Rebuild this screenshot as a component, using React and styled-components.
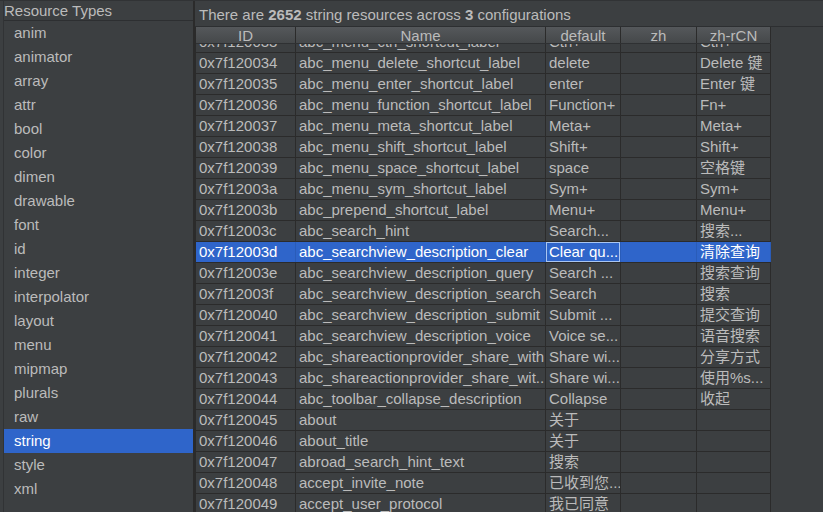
import React from 'react';
import styled, { createGlobalStyle } from 'styled-components';

const GlobalStyle = createGlobalStyle`
  *, *::before, *::after {
    box-sizing: border-box;
  }
  html, body {
    margin: 0;
    padding: 0;
    background: #3c3f41;
  }
  body {
    font-family: "Liberation Sans", "Noto Sans CJK SC", sans-serif;
    font-size: 15px;
    color: #bbbbbb;
  }
`;

const Page = styled.div`
  display: flex;
  width: 823px;
  height: 512px;
  overflow: hidden;
  border-top: 1px solid #313335;
  background: #3c3f41;
`;

const Sidebar = styled.div`
  display: flex;
  flex-direction: column;
  flex: none;
  width: 191px;
  margin-left: 3px;
  border-left: 1px solid #313335;
  border-right: 1px solid #2b2b2b;
`;

const SidebarTitle = styled.div`
  height: 20px;
  line-height: 20px;
  border-bottom: 1px solid #2d2f31;
  white-space: nowrap;
`;

const TypeList = styled.div`
  display: flex;
  flex-direction: column;
`;

const TypeItem = styled.div`
  height: 24px;
  line-height: 24px;
  padding-left: 10px;
  background: ${props => (props.selected ? '#2f65ca' : 'transparent')};
  color: ${props => (props.selected ? '#ffffff' : '#bbbbbb')};
`;

const Main = styled.div`
  display: flex;
  flex-direction: column;
  flex: 1;
  min-width: 0;
  border-left: 1px solid #2b2b2b;
`;

const Summary = styled.div`
  height: 26px;
  line-height: 27px;
  padding-left: 4px;
  border-bottom: 1px solid #2d2f31;
  white-space: nowrap;

  b {
    font-weight: bold;
  }
`;

const Table = styled.div`
  display: flex;
  flex-direction: column;
  flex: 1;
  min-height: 0;
  width: 576px;
  border-left: 1px solid #2b2b2b;
`;

const columns = '100px 250px 75px 76px 74px';

const HeaderRow = styled.div`
  display: grid;
  grid-template-columns: ${columns};
  height: 17px;
  flex: none;
  position: relative;
  z-index: 1;
  background: linear-gradient(#55585b, #45484a);
  border-bottom: 1px solid #2f3133;
`;

const HeaderCell = styled.div`
  text-align: center;
  line-height: 18px;
  border-right: 1px solid #2b2b2b;
  white-space: nowrap;
  overflow: hidden;
`;

const Body = styled.div`
  flex: 1;
  min-height: 0;
  overflow: hidden;
`;

const Rows = styled.div`
  margin-top: -12px;
`;

const Row = styled.div`
  display: grid;
  grid-template-columns: ${columns};
  height: 21px;
  border-bottom: 1px solid #2b2b2b;
  background: ${props => (props.selected ? '#2f65ca' : '#3c3f41')};
  color: ${props => (props.selected ? '#ffffff' : '#bbbbbb')};
`;

const Cell = styled.div`
  padding-left: 3px;
  line-height: 20px;
  white-space: nowrap;
  overflow: hidden;
  border-right: 1px solid ${props => (props.selected ? '#2a5cb8' : '#2b2b2b')};
  box-shadow: ${props => (props.focused ? 'inset 0 0 0 1px #a9c6f2' : 'none')};
`;

const types = [
  'anim', 'animator', 'array', 'attr', 'bool', 'color', 'dimen', 'drawable',
  'font', 'id', 'integer', 'interpolator', 'layout', 'menu', 'mipmap',
  'plurals', 'raw', 'string', 'style', 'xml',
];

const rows = [
  ['0x7f120033', 'abc_menu_ctrl_shortcut_label', 'Ctrl+', '', 'Ctrl+'],
  ['0x7f120034', 'abc_menu_delete_shortcut_label', 'delete', '', 'Delete 键'],
  ['0x7f120035', 'abc_menu_enter_shortcut_label', 'enter', '', 'Enter 键'],
  ['0x7f120036', 'abc_menu_function_shortcut_label', 'Function+', '', 'Fn+'],
  ['0x7f120037', 'abc_menu_meta_shortcut_label', 'Meta+', '', 'Meta+'],
  ['0x7f120038', 'abc_menu_shift_shortcut_label', 'Shift+', '', 'Shift+'],
  ['0x7f120039', 'abc_menu_space_shortcut_label', 'space', '', '空格键'],
  ['0x7f12003a', 'abc_menu_sym_shortcut_label', 'Sym+', '', 'Sym+'],
  ['0x7f12003b', 'abc_prepend_shortcut_label', 'Menu+', '', 'Menu+'],
  ['0x7f12003c', 'abc_search_hint', 'Search...', '', '搜索...'],
  ['0x7f12003d', 'abc_searchview_description_clear', 'Clear qu...', '', '清除查询'],
  ['0x7f12003e', 'abc_searchview_description_query', 'Search ...', '', '搜索查询'],
  ['0x7f12003f', 'abc_searchview_description_search', 'Search', '', '搜索'],
  ['0x7f120040', 'abc_searchview_description_submit', 'Submit ...', '', '提交查询'],
  ['0x7f120041', 'abc_searchview_description_voice', 'Voice se...', '', '语音搜索'],
  ['0x7f120042', 'abc_shareactionprovider_share_with', 'Share wi...', '', '分享方式'],
  ['0x7f120043', 'abc_shareactionprovider_share_wit...', 'Share wi...', '', '使用%s...'],
  ['0x7f120044', 'abc_toolbar_collapse_description', 'Collapse', '', '收起'],
  ['0x7f120045', 'about', '关于', '', ''],
  ['0x7f120046', 'about_title', '关于', '', ''],
  ['0x7f120047', 'abroad_search_hint_text', '搜索', '', ''],
  ['0x7f120048', 'accept_invite_note', '已收到您...', '', ''],
  ['0x7f120049', 'accept_user_protocol', '我已同意', '', ''],
];

const headers = ['ID', 'Name', 'default', 'zh', 'zh-rCN'];

const selectedId = '0x7f12003d';

const App = () => (
  <>
    <GlobalStyle />
    <Page>
      <Sidebar>
        <SidebarTitle>Resource Types</SidebarTitle>
        <TypeList>
          {types.map(type => (
            <TypeItem key={type} selected={type === 'string'}>
              {type}
            </TypeItem>
          ))}
        </TypeList>
      </Sidebar>
      <Main>
        <Summary>
          There are <b>2652</b> string resources across <b>3</b> configurations
        </Summary>
        <Table>
          <HeaderRow>
            {headers.map(h => (
              <HeaderCell key={h}>{h}</HeaderCell>
            ))}
          </HeaderRow>
          <Body>
            <Rows>
              {rows.map(row => {
                const selected = row[0] === selectedId;
                return (
                  <Row key={row[0]} selected={selected}>
                    {row.map((value, i) => (
                      <Cell
                        key={i}
                        selected={selected}
                        focused={selected && i === 2}
                      >
                        {value}
                      </Cell>
                    ))}
                  </Row>
                );
              })}
            </Rows>
          </Body>
        </Table>
      </Main>
    </Page>
  </>
);

export default App;
